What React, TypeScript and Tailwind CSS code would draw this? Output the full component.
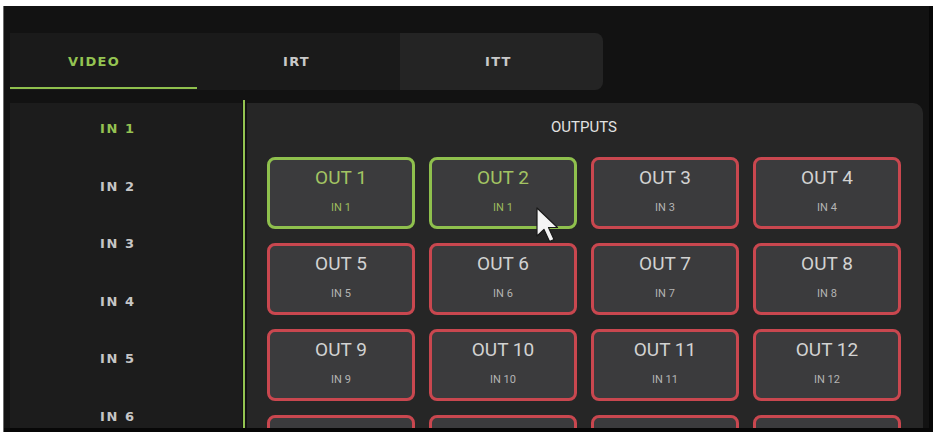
type Route = { out: number; input: number; live: boolean };

const inputs = [1, 2, 3, 4, 5, 6];

const routes: Route[] = Array.from({ length: 16 }, (_, i) => {
  const out = i + 1;
  if (out === 1 || out === 2) return { out, input: 1, live: true };
  return { out, input: out, live: false };
});

const tabs = [
  { name: 'VIDEO', pad: 'pl-[58px]', bg: 'bg-[#1a1a1a]', w: 'w-[187px]' },
  { name: 'IRT', pad: 'pl-[86px]', bg: 'bg-[#1a1a1a]', w: 'w-[203px]' },
  { name: 'ITT', pad: 'pl-[85px]', bg: 'bg-[#242424] rounded-r-[8px]', w: 'w-[203px]' },
];

function RouteCard({ r }: { r: Route }) {
  return (
    <div
      className={
        r.live
          ? 'h-[72px] rounded-[8px] border-[3px] border-[#8fc04d] bg-[#3b3b3d] flex flex-col items-center'
          : 'h-[72px] rounded-[8px] border-[3px] border-[#c9474f] bg-[#3b3b3d] flex flex-col items-center'
      }
    >
      <span
        className={
          r.live
            ? 'mt-[7px] text-[19px] leading-[22px] text-[#a3c463]'
            : 'mt-[7px] text-[19px] leading-[22px] text-[#d2d2d2]'
        }
      >
        OUT {r.out}
      </span>
      <span
        className={
          r.live
            ? 'mt-[12px] text-[11px] leading-[13px] text-[#9dbb5e]'
            : 'mt-[12px] text-[11px] leading-[13px] text-[#b4b4b4]'
        }
      >
        IN {r.input}
      </span>
    </div>
  );
}

export default function App() {
  return (
    <div className="w-[939px] h-[435px] bg-white pt-[6px] pl-[3px] font-['Roboto',sans-serif]">
      <div className="relative w-[930px] h-[426px] bg-[#070707] border-l border-[#6b6b6b]">
        <div className="w-[925px] h-[422px] bg-[#121212] pt-[27px] pl-[6px] flex flex-col overflow-hidden">
          {/* tab strip */}
          <div className="flex h-[57px] font-['DejaVu_Sans',sans-serif]">
            {tabs.map((t, i) => (
              <div key={t.name} className={`relative ${t.w} ${t.bg} ${t.pad} flex items-center`}>
                <span
                  className={
                    i === 0
                      ? 'text-[13px] font-bold tracking-[0.1em] text-[#94c452]'
                      : 'text-[13px] font-bold tracking-[0.1em] text-[#c9c9c9]'
                  }
                >
                  {t.name}
                </span>
                {i === 0 && <div className="absolute left-0 right-0 bottom-[1px] h-[2px] bg-[#8fc04d]" />}
              </div>
            ))}
          </div>

          <div className="flex mt-[13px] flex-1 min-h-0">
            {/* inputs */}
            <div className="w-[232px] bg-[#1c1c1c] flex flex-col pt-[18px] pl-[90px] gap-[41.5px] font-['DejaVu_Sans',sans-serif]">
              {inputs.map((n) => (
                <span
                  key={n}
                  className={
                    n === 1
                      ? 'text-[13px] leading-[16px] font-bold tracking-[0.12em] text-[#95c252]'
                      : 'text-[13px] leading-[16px] font-bold tracking-[0.12em] text-[#c6c6c6]'
                  }
                >
                  IN {n}
                </span>
              ))}
            </div>
            <div className="w-[2px] ml-[1px] -mt-[3px] bg-[#93c451]" />

            {/* outputs */}
            <div className="ml-[2px] w-[676px] bg-[#262626] rounded-tr-[10px] pt-[15px] px-[20px]">
              <div className="text-center text-[15px] leading-[18px] text-[#e2e2e2] pr-[2px]">OUTPUTS</div>
              <div className="mt-[21px] grid grid-cols-[repeat(4,148px)] gap-x-[14px] gap-y-[14px]">
                {routes.map((r) => (
                  <RouteCard key={r.out} r={r} />
                ))}
              </div>
            </div>
          </div>
        </div>

        {/* pointer */}
        <div className="absolute left-[529px] top-[200px]">
          <svg width="30" height="40" viewBox="0 0 30 40">
            <path
              d="M4 2 L4 30 L11 23.5 L16.5 35.5 L21 33.5 L15.5 21.5 L24.5 21.5 Z"
              fill="#f4f4f4"
              stroke="#1a1a1a"
              strokeWidth="1.2"
              strokeLinejoin="round"
            />
          </svg>
        </div>
      </div>
    </div>
  );
}
